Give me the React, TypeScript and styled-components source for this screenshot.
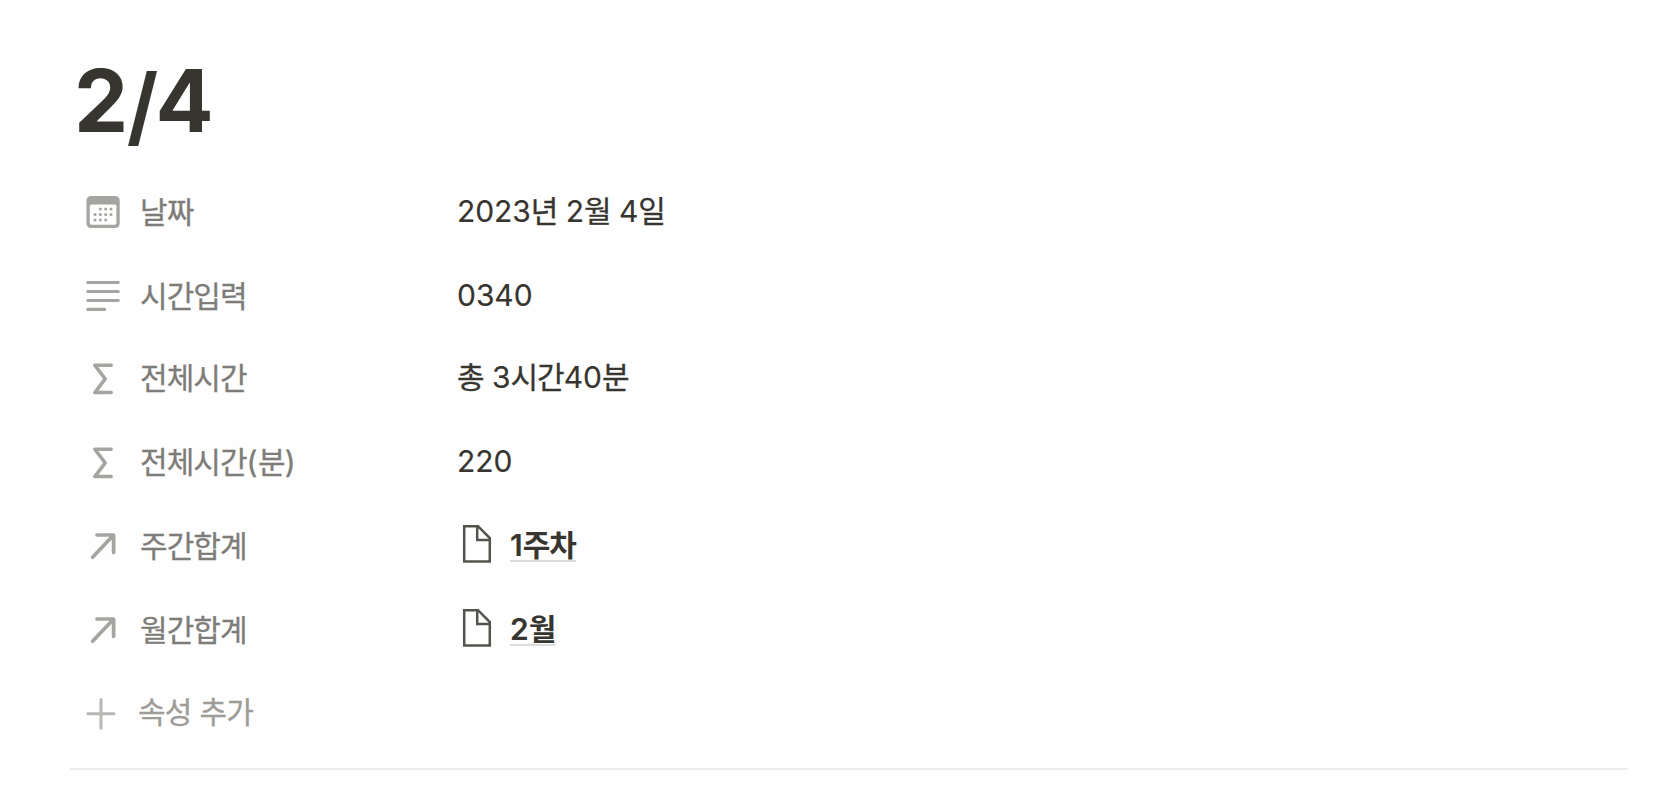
import React from 'react';
import styled, { createGlobalStyle } from 'styled-components';

const COLORS = {
  text: '#37352f',
  label: '#7d7c78',
  icon: '#a5a4a0',
  muted: '#9d9c98',
  mutedIcon: '#b9b8b5',
  page: '#55534e',
  divider: '#ebebea',
};

const GlobalStyle = createGlobalStyle`
  body {
    margin: 0;
    background: #fefefe;
    color: ${COLORS.text};
    font-family: Inter, 'Noto Sans CJK KR', sans-serif;
  }
  svg {
    display: block;
    flex: none;
  }
`;

const Page = styled.main`
  width: 1558px;
  height: 786px;
  margin-left: 70px;
  box-sizing: border-box;
  padding-top: 48px;
`;

const Title = styled.h1`
  margin: 0 0 24px;
  padding-left: 4px;
  height: 106px;
  line-height: 106px;
  font-size: 86px;
  font-weight: 700;
  letter-spacing: -1px;
`;

const Slash = styled.span`
  display: inline-block;
  margin-right: -4px;
  transform: translateY(5px) scaleX(0.93);
  transform-origin: left center;
`;

const Row = styled.div<{ $gap?: number }>`
  display: grid;
  grid-template-columns: 371px 1fr;
  height: 68px;
  padding-left: 16px;
  margin-bottom: ${(p) => p.$gap ?? 16}px;
`;

const Label = styled.div<{ $muted?: boolean }>`
  display: flex;
  align-items: center;
  gap: ${(p) => (p.$muted ? 18 : 20)}px;
  color: ${(p) => (p.$muted ? COLORS.muted : COLORS.label)};
  svg {
    color: ${(p) => (p.$muted ? COLORS.mutedIcon : COLORS.icon)};
  }
`;

const Value = styled.div`
  display: flex;
  align-items: center;
  padding-bottom: 2px;
`;

const Text = styled.span`
  font-size: 30px;
  line-height: 40px;
  white-space: pre;
  word-spacing: 0.8px;
  -webkit-text-stroke: 0.3px currentColor;
`;

const Hangul = styled.span`
  letter-spacing: -0.95px;
`;

const Digits = styled.span`
  letter-spacing: -0.05px;
  -webkit-text-stroke: 0.15px currentColor;
`;

const Paren = styled.span`
  letter-spacing: 0.5px;
`;

const PageLink = styled.a`
  display: flex;
  align-items: center;
  gap: 16px;
  padding: 0 0 2px 3px;
  ${Text} {
    font-weight: 600;
    line-height: 30px;
    padding-top: 4px;
    border-bottom: 2px solid #dcdcdb;
    -webkit-text-stroke: 0;
  }
`;

const Divider = styled.div`
  height: 2px;
  margin-top: 22px;
  background: ${COLORS.divider};
`;

const Icon = ({ children }: { children: React.ReactNode }) => (
  <svg
    width='34'
    height='34'
    viewBox='0 0 34 34'
    fill='none'
    stroke='currentColor'
    strokeWidth='3.2'
    strokeLinecap='round'
    strokeLinejoin='round'
    overflow='visible'
  >
    {children}
  </svg>
);

const DOTS = [
  [14.3, 14], [19.7, 14], [25, 14],
  [9, 19.5], [14.3, 19.5], [19.7, 19.5], [25, 19.5],
  [9, 25], [14.3, 25], [19.7, 25],
];

const DateIcon = () => (
  <Icon>
    <path
      d='M5.5 1H28.7Q33.7 1 33.7 6V28Q33.7 33 28.7 33H5.5Q.5 33 .5 28V6Q.5 1 5.5 1ZM5.4 9.4Q3.8 9.4 3.8 11V28Q3.8 29.7 5.5 29.7H28.7Q30.4 29.7 30.4 28V11Q30.4 9.4 28.8 9.4Z'
      fill='currentColor'
      fillRule='evenodd'
      stroke='none'
    />
    {DOTS.map(([x, y]) => (
      <circle key={`${x}-${y}`} cx={x} cy={y} r='1.5' fill='currentColor' stroke='none' />
    ))}
  </Icon>
);

const TextIcon = () => (
  <Icon>
    <path d='M1.8 3.5H32.2M1.8 12.5H32.2M1.8 21.5H32.2M1.8 30.4H18.6' />
  </Icon>
);

const FormulaIcon = () => (
  <Icon>
    <path d='M25.2 4.2H8.8L19.2 17.9L8.8 31.6H25.2' strokeWidth='3.5' />
  </Icon>
);

const RelationIcon = () => (
  <Icon>
    <path d='M11 6H27.6V23.4M6.6 28.2L27.4 6.2' strokeWidth='3.7' />
  </Icon>
);

const PlusIcon = () => (
  <Icon>
    <path d='M15 4.4V33.2M1.8 18.7H28' strokeWidth='3' />
  </Icon>
);

const PageIcon = () => (
  <svg width='34' height='40' viewBox='0 0 34 40' fill='none' stroke={COLORS.page} strokeWidth='2.5'>
    <path d='M4.2 2.2H18L29.8 14V37.6H4.2ZM17.2 2.2V16H29.8' />
  </svg>
);

// Hangul, digits and parentheses are tracked differently
const Mixed = ({ children }: { children: string }) => (
  <Text>
    {children
      .split(/(\d+|[()])/)
      .filter(Boolean)
      .map((part, i) => {
        if (/\d/.test(part)) return <Digits key={i}>{part}</Digits>;
        if (/[()]/.test(part)) return <Paren key={i}>{part}</Paren>;
        return <Hangul key={i}>{part}</Hangul>;
      })}
  </Text>
);

interface IProperty {
  icon: React.ReactNode;
  label: string;
  value: string;
  isPage?: boolean;
  gap?: number;
}

const PROPERTIES: IProperty[] = [
  { icon: <DateIcon />, label: '날짜', value: '2023년 2월 4일' },
  { icon: <TextIcon />, label: '시간입력', value: '0340', gap: 14 },
  { icon: <FormulaIcon />, label: '전체시간', value: '총 3시간40분' },
  { icon: <FormulaIcon />, label: '전체시간(분)', value: '220' },
  { icon: <RelationIcon />, label: '주간합계', value: '1주차', isPage: true },
  { icon: <RelationIcon />, label: '월간합계', value: '2월', isPage: true, gap: 14 },
];

const Property = (props: IProperty) => {
  const { icon, label, value, isPage = false, gap } = props;
  return (
    <Row $gap={gap}>
      <Label>
        {icon}
        <Mixed>{label}</Mixed>
      </Label>
      <Value>
        {isPage ? (
          <PageLink>
            <PageIcon />
            <Mixed>{value}</Mixed>
          </PageLink>
        ) : (
          <Mixed>{value}</Mixed>
        )}
      </Value>
    </Row>
  );
};

const App = () => (
  <>
    <GlobalStyle />
    <Page>
      <Title>
        2<Slash>/</Slash>4
      </Title>
      {PROPERTIES.map((item) => (
        <Property key={item.label} {...item} />
      ))}
      <Row $gap={0}>
        <Label $muted>
          <PlusIcon />
          <Mixed>속성 추가</Mixed>
        </Label>
      </Row>
      <Divider />
    </Page>
  </>
);

export default App;
